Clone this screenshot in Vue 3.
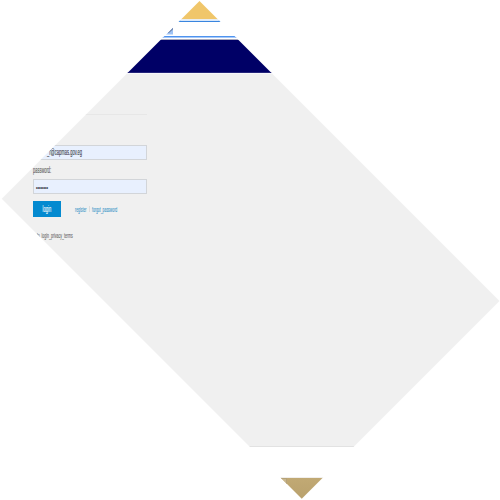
<script setup>
const emailTail = '_r@capmas.gov.eg'
</script>

<template>
  <div class="frame">
    <header class="top">
      <div class="gold"></div>
      <div class="gold-fade"></div>
      <div class="tab-line"></div>
      <div class="toolbar">
        <svg class="mark" width="8" height="8" viewBox="0 0 8 8">
          <path d="M0 7.5L7 0.5V7.5Z" fill="#9fc3f5" />
          <path d="M1.5 6L7 0.5V2.5L3 6Z" fill="#7187ad" />
        </svg>
      </div>
      <div class="tool-line"></div>
      <div class="tool-edge"></div>
      <div class="navy"></div>
    </header>

    <main class="page">
      <form class="login" @submit.prevent>
        <div class="rule"></div>
        <div class="field email">
          <svg width="100" height="12"><text transform="translate(12 8.1) scale(.6 1)" font-size="8.3" textLength="58.5" lengthAdjust="spacingAndGlyphs">{{ emailTail }}</text></svg>
        </div>
        <div class="label">
          <svg width="60" height="11"><text transform="translate(0 8.2) scale(.55 1)" font-size="8.2" textLength="33" lengthAdjust="spacingAndGlyphs">password:</text></svg>
        </div>
        <div class="field">
          <svg width="100" height="12"><text transform="translate(1 8.6) scale(.55 1)" font-size="7.4" textLength="22" lengthAdjust="spacingAndGlyphs" class="dots">••••••••</text></svg>
        </div>
        <div class="actions">
          <button class="submit" type="submit">
            <svg width="10" height="12"><text transform="translate(0.6 8.9) scale(.5 1)" font-size="8.8" textLength="17.2" lengthAdjust="spacingAndGlyphs">login</text></svg>
          </button>
          <a class="link register"><svg width="13" height="12"><text transform="translate(0 8.5) scale(.5 1)" font-size="7.8" textLength="23" lengthAdjust="spacingAndGlyphs">register</text></svg></a>
          <span class="divider"></span>
          <a class="link"><svg width="27" height="12"><text transform="translate(0 8.5) scale(.5 1)" font-size="7.8" textLength="50.4" lengthAdjust="spacingAndGlyphs">forgot_password</text></svg></a>
        </div>
        <div class="terms">
          <svg width="45" height="12"><text transform="translate(0 8.8) scale(.5 1)" font-size="7.8" textLength="77.4" lengthAdjust="spacingAndGlyphs">info_login_privacy_terms</text></svg>
        </div>
      </form>
    </main>

    <div class="page-edge"></div>
    <div class="gap"></div>
    <footer class="sand"><span class="corner"></span></footer>
  </div>
</template>

<style>
body {
  background: #fff;
}
</style>

<style scoped>
.frame {
  width: 500px;
  height: 500px;
  display: flex;
  flex-direction: column;
  overflow: hidden;
  background: #fff;
  font-family: "Liberation Sans", Arial, sans-serif;
  clip-path: polygon(199.5px 1px, 499.5px 301px, 301.75px 498.75px, 1.75px 198.75px);
}
svg {
  display: block;
  flex: none;
  overflow: visible;
}
text {
  stroke: currentColor;
  stroke-width: 0.12px;
  fill: currentColor;
}
.gold {
  height: 19px;
  background: #f0c66a;
}
.gold-fade {
  height: 1px;
  background: #e9edf0;
}
.tab-line {
  height: 1px;
  background: #3985df;
  border-top: 1px solid #d8e8fb;
}
.toolbar {
  height: 14px;
  box-sizing: border-box;
  padding: 5px 0 0 166px;
}
.tool-line {
  height: 1px;
  background: #4f93ee;
  border-bottom: 1px solid #a6c9fa;
}
.tool-edge {
  height: 1px;
  margin-top: 1px;
  background: #aaa9ba;
}
.navy {
  height: 32px;
  background: #000066;
  border-bottom: 1px solid #25257b;
}
.page {
  height: 373px;
  background: #f0f0f0;
  box-shadow: inset 0 1px #f7f7fa;
}
.login {
  width: 114px;
  display: flex;
  flex-direction: column;
  padding: 41px 0 0 33px;
}
.rule {
  height: 1px;
  background: #e7e7e7;
  margin-bottom: 30px;
}
.field {
  height: 15px;
  box-sizing: border-box;
  padding: 1px 0 0 1px;
  border: 1px solid #d2d5d9;
  background: #e8f0fe;
  color: #3b404b;
}
.label {
  height: 11px;
  margin: 5px 0 3px;
  color: #606060;
}
.actions {
  display: flex;
  align-items: center;
  height: 16px;
  margin-top: 7px;
}
.submit {
  width: 28px;
  height: 16px;
  display: flex;
  align-items: center;
  justify-content: center;
  padding: 0;
  border: 0;
  background: #048ad0;
  color: #fff;
  font-family: inherit;
}
.link {
  color: #3a96c9;
}
.register {
  margin-left: 14px;
}
.divider {
  width: 1px;
  height: 6px;
  margin: 0 2px 0 1px;
  background: #dcdcdc;
}
.terms {
  margin: 12px 0 0 1px;
  color: #6a6a6a;
}
.page-edge {
  height: 1px;
  background: #e2e2e2;
}
.gap {
  height: 30px;
  border-bottom: 1px solid #f1efec;
}
.sand {
  height: 22px;
  box-sizing: border-box;
  padding-left: 280px;
  background: linear-gradient(#c1a974, #b9a16d);
}
.corner {
  display: block;
  width: 7px;
  height: 7px;
  background: #c9b78e;
  box-shadow: inset 0 1px #b5a27a, inset -1px 0 #b5a27a;
}
</style>
